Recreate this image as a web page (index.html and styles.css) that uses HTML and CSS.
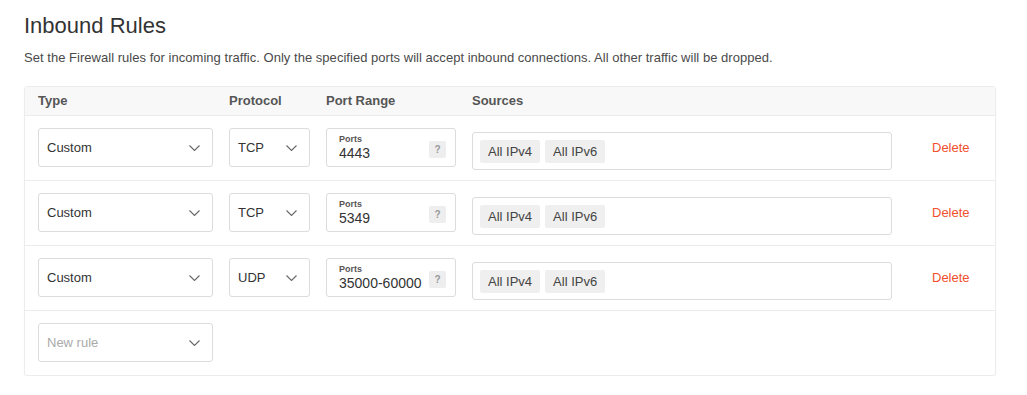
FILE: index.html
```html
<!DOCTYPE html>
<html lang="en">
<head>
<meta charset="utf-8">
<title>Inbound Rules</title>
<link rel="stylesheet" href="styles.css">
</head>
<body>
<div class="page">
  <h1 class="title">Inbound Rules</h1>
  <p class="desc">Set the Firewall rules for incoming traffic. Only the specified ports will accept inbound connections. All other traffic will be dropped.</p>

  <div class="table">
    <div class="row head">
      <div>Type</div>
      <div>Protocol</div>
      <div>Port Range</div>
      <div>Sources</div>
      <div></div>
    </div>

    <div class="row">
      <div class="select"><span>Custom</span><svg class="chev" viewBox="0 0 11 6"><path d="M0.5 0.5 L5.5 5.5 L10.5 0.5"/></svg></div>
      <div class="select"><span>TCP</span><svg class="chev" viewBox="0 0 11 6"><path d="M0.5 0.5 L5.5 5.5 L10.5 0.5"/></svg></div>
      <div class="port"><div class="port-text"><span class="port-label">Ports</span><span class="port-val">4443</span></div><span class="help">?</span></div>
      <div class="sources"><span class="chip">All IPv4</span><span class="chip">All IPv6</span></div>
      <a class="delete">Delete</a>
    </div>

    <div class="row">
      <div class="select"><span>Custom</span><svg class="chev" viewBox="0 0 11 6"><path d="M0.5 0.5 L5.5 5.5 L10.5 0.5"/></svg></div>
      <div class="select"><span>TCP</span><svg class="chev" viewBox="0 0 11 6"><path d="M0.5 0.5 L5.5 5.5 L10.5 0.5"/></svg></div>
      <div class="port"><div class="port-text"><span class="port-label">Ports</span><span class="port-val">5349</span></div><span class="help">?</span></div>
      <div class="sources"><span class="chip">All IPv4</span><span class="chip">All IPv6</span></div>
      <a class="delete">Delete</a>
    </div>

    <div class="row">
      <div class="select"><span>Custom</span><svg class="chev" viewBox="0 0 11 6"><path d="M0.5 0.5 L5.5 5.5 L10.5 0.5"/></svg></div>
      <div class="select"><span>UDP</span><svg class="chev" viewBox="0 0 11 6"><path d="M0.5 0.5 L5.5 5.5 L10.5 0.5"/></svg></div>
      <div class="port"><div class="port-text"><span class="port-label">Ports</span><span class="port-val">35000-60000</span></div><span class="help">?</span></div>
      <div class="sources"><span class="chip">All IPv4</span><span class="chip">All IPv6</span></div>
      <a class="delete">Delete</a>
    </div>

    <div class="row last">
      <div class="select placeholder"><span>New rule</span><svg class="chev" viewBox="0 0 11 6"><path d="M0.5 0.5 L5.5 5.5 L10.5 0.5"/></svg></div>
    </div>
  </div>
</div>
</body>
</html>
```

FILE: styles.css
```css
* { box-sizing: border-box; }

body {
  margin: 0;
  background: #fff;
  font-family: "Liberation Sans", Arial, sans-serif;
  color: #333;
}

.page {
  padding: 13px 31px 0 24px;
}

.title {
  margin: 0;
  font-size: 22px;
  line-height: 26px;
  font-weight: normal;
  color: #333;
}

.desc {
  margin: 10px 0 0;
  font-size: 13px;
  line-height: 18px;
  letter-spacing: 0.03px;
  color: #4a4a4a;
}

.table {
  margin-top: 19px;
  border: 1px solid #ececec;
  border-radius: 3px;
  box-shadow: 0 1px 2px rgba(0,0,0,0.04);
}

.row {
  display: grid;
  grid-template-columns: 175px 81px 130px 420px 1fr;
  grid-template-rows: 39px;
  column-gap: 16px;
  padding: 12px 13px 13px;
  border-bottom: 1px solid #ececec;
}

.row.last { border-bottom: none; }

.row.head {
  grid-template-rows: 28px;
  padding: 0 13px;
  background: #f8f8f8;
  font-size: 13px;
  font-weight: bold;
  color: #555;
  line-height: 28px;
}

.select {
  display: flex;
  align-items: center;
  justify-content: space-between;
  border: 1px solid #dcdcdc;
  border-radius: 3px;
  padding: 0 12px 0 8px;
  font-size: 13px;
  color: #333;
}

.select.placeholder { color: #aaa; }

.chev {
  width: 11px;
  height: 6px;
  fill: none;
  stroke: #666;
  stroke-width: 1.1;
}

.port {
  display: flex;
  align-items: center;
  justify-content: space-between;
  border: 1px solid #dcdcdc;
  border-radius: 3px;
  padding: 0 9px 0 12px;
}

.port-text {
  display: flex;
  flex-direction: column;
}

.port-label {
  font-size: 9px;
  font-weight: bold;
  color: #555;
  line-height: 10px;
}

.port-val {
  font-size: 14px;
  line-height: 18px;
  color: #333;
}

.help {
  width: 17px;
  height: 17px;
  margin-top: 3px;
  background: #eee;
  border-radius: 2px;
  font-size: 10px;
  font-weight: bold;
  color: #999;
  display: flex;
  align-items: center;
  justify-content: center;
}

.sources {
  align-self: start;
  margin-top: 4px;
  height: 38px;
  display: flex;
  align-items: center;
  gap: 5px;
  padding: 0 7px;
  border: 1px solid #dcdcdc;
  border-radius: 3px;
}

.chip {
  height: 23px;
  line-height: 23px;
  padding: 0 8px;
  background: #efefef;
  border-radius: 2px;
  font-size: 13px;
  color: #444;
}

.delete {
  align-self: center;
  padding-left: 24px;
  font-size: 13px;
  color: #f0502d;
}
```
